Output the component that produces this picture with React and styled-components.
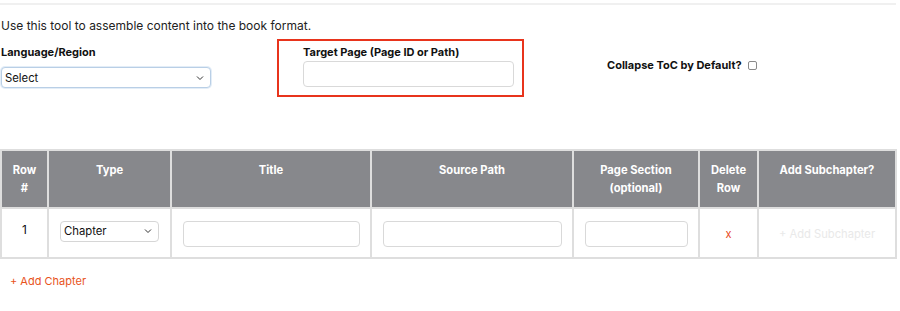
import React from "react";
import styled, { createGlobalStyle } from "styled-components";

const Global = createGlobalStyle`
  html, body { margin: 0; padding: 0; background: #fff; }
  body { font-family: Inter, "Noto Sans", Arial, sans-serif; color: #111; font-size: 12px; }
  * { box-sizing: border-box; }
`;

const Page = styled.div`
  width: 897px;
  padding: 3px 0 0 0;
`;

const TopRule = styled.div`
  height: 2px;
  background: #f0f0f0;
  margin-right: 1px;
`;

const Intro = styled.p`
  margin: 13px 0 0 1px;
  font-size: 12px;
  line-height: 16px;
  color: #222;
`;

const FormRow = styled.div`
  display: flex;
  align-items: flex-start;
  margin-top: 10px;
  padding-left: 1px;
`;

const Field = styled.div`
  display: flex;
  flex-direction: column;
  width: ${(p) => p.$w}px;
`;

const Label = styled.label`
  font-weight: 700;
  font-size: 11px;
  line-height: 16px;
  color: #111;
`;

const Highlight = styled.div`
  margin-left: 66px;
  margin-top: -5px;
  width: 247px;
  height: 58px;
  border: 2px solid #e8341c;
  padding: 3px 8px 0 24px;
  display: flex;
  flex-direction: column;
`;

const SelectBox = styled.div`
  position: relative;
  margin-top: ${(p) => p.$mt || 0}px;
  width: ${(p) => p.$w}px;
  height: ${(p) => p.$h}px;
  border: 1px solid ${(p) => (p.$focus ? "#b9cfe6" : "#d6d6d6")};
  border-radius: 4px;
  background: #fff;
  display: flex;
  align-items: center;
  padding-left: 3px;
  font-size: 11.3px;
  color: #111;
  box-shadow: ${(p) => (p.$focus ? "0 0 0 1px #e3edf7" : "none")};
`;

const Chevron = styled.svg`
  position: absolute;
  right: 6px;
  top: 50%;
  transform: translateY(-50%);
`;

const TextInput = styled.div`
  width: ${(p) => p.$w}px;
  height: 26px;
  border: 1px solid #d9d9d9;
  border-radius: 4px;
  background: #fff;
  margin-top: ${(p) => p.$mt || 0}px;
`;

const Collapse = styled.div`
  margin-left: 83px;
  margin-top: 14px;
  display: flex;
  align-items: center;
  gap: 6px;
  font-weight: 700;
  font-size: 11px;
`;

const Check = styled.span`
  width: 9px;
  height: 9px;
  border: 1px solid #8a8a8a;
  border-radius: 2px;
  display: inline-block;
  margin-top: 1px;
`;

const Table = styled.table`
  margin-top: 52px;
  width: 897px;
  table-layout: fixed;
  border-collapse: collapse;
  border: 2px solid #dedede;
`;

const Col = styled.col`
  width: ${(p) => p.$w}px;
`;

const Th = styled.th`
  background: #87888c;
  color: #fff;
  font-weight: 700;
  font-size: 11.2px;
  line-height: 18px;
  height: 58px;
  vertical-align: top;
  padding: 10px 2px 0;
  border: 2px solid #dedede;
`;

const Td = styled.td`
  border: 2px solid #dedede;
  height: 50px;
  text-align: center;
  vertical-align: middle;
  padding: 0 11px;
  font-size: 12px;
  color: #111;
`;

const RowNum = styled.span`
  display: inline-block;
  position: relative;
  top: -4px;
`;

const CellInner = styled.div`
  display: flex;
  justify-content: center;
`;

const DeleteX = styled.span`
  color: #e8481c;
  font-size: 11px;
`;

const Ghost = styled.span`
  color: #e9e9e9;
  font-size: 11.2px;
  white-space: nowrap;
`;

const AddChapter = styled.div`
  margin: 15px 0 0 10px;
  color: #e8541c;
  font-size: 11px;
`;

const ChevronIcon = () => (
  <Chevron width="8" height="5" viewBox="0 0 8 5">
    <path d="M1 1 L4 4 L7 1" fill="none" stroke="#333" strokeWidth="1" />
  </Chevron>
);

const widths = [47, 123, 200, 202, 126, 59, 138];

export default function App() {
  return (
    <Page>
      <Global />
      <TopRule />
      <Intro>Use this tool to assemble content into the book format.</Intro>
      <FormRow>
        <Field $w={210}>
          <Label>Language/Region</Label>
          <SelectBox $w={210} $h={21} $mt={7} $focus>
            Select
            <ChevronIcon />
          </SelectBox>
        </Field>
        <Highlight>
          <Label>Target Page (Page ID or Path)</Label>
          <TextInput $w={211} $mt={1} />
        </Highlight>
        <Collapse>
          Collapse ToC by Default? <Check />
        </Collapse>
      </FormRow>
      <Table>
        <colgroup>
          {widths.map((w, i) => (
            <Col key={i} $w={w} />
          ))}
        </colgroup>
        <thead>
          <tr>
            <Th>Row<br />#</Th>
            <Th>Type</Th>
            <Th>Title</Th>
            <Th>Source Path</Th>
            <Th>Page Section<br />(optional)</Th>
            <Th>Delete<br />Row</Th>
            <Th>Add Subchapter?</Th>
          </tr>
        </thead>
        <tbody>
          <tr>
            <Td><RowNum>1</RowNum></Td>
            <Td>
              <CellInner>
                <SelectBox $w={100} $h={21} $mt={-4}>
                  Chapter
                  <ChevronIcon />
                </SelectBox>
              </CellInner>
            </Td>
            <Td><TextInput $w={177} $mt={1} /></Td>
            <Td><TextInput $w={179} $mt={1} /></Td>
            <Td><TextInput $w={103} $mt={1} /></Td>
            <Td><DeleteX>x</DeleteX></Td>
            <Td><Ghost>+ Add Subchapter</Ghost></Td>
          </tr>
        </tbody>
      </Table>
      <AddChapter>+ Add Chapter</AddChapter>
    </Page>
  );
}
